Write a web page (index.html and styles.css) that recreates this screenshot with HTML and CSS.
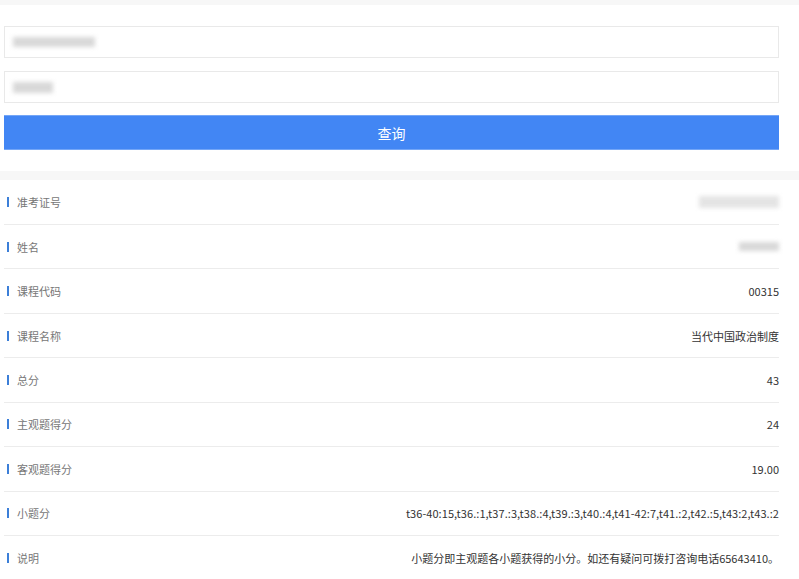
FILE: index.html
```html
<!DOCTYPE html>
<html lang="zh-CN">
<head>
    <meta charset="UTF-8">
    <meta name="viewport" content="width=device-width, initial-scale=1.0">
    <title>成绩查询</title>
    <link rel="stylesheet" href="styles.css">
</head>
<body>
    <div class="band top-band"></div>

    <div class="query-form">
        <div class="field"><span class="blur blur-id"></span></div>
        <div class="field"><span class="blur blur-code"></span></div>
        <div class="btn-query">查询</div>
    </div>

    <div class="band mid-band"></div>

    <ul class="result-list">
        <li class="row"><span class="label">准考证号</span><span class="value"><span class="blur blur-val-long"></span></span></li>
        <li class="row"><span class="label">姓名</span><span class="value"><span class="blur blur-val-short"></span></span></li>
        <li class="row"><span class="label">课程代码</span><span class="value">00315</span></li>
        <li class="row"><span class="label">课程名称</span><span class="value">当代中国政治制度</span></li>
        <li class="row"><span class="label">总分</span><span class="value">43</span></li>
        <li class="row"><span class="label">主观题得分</span><span class="value">24</span></li>
        <li class="row"><span class="label">客观题得分</span><span class="value">19.00</span></li>
        <li class="row"><span class="label">小题分</span><span class="value score-detail">t36-40:15,t36.:1,t37.:3,t38.:4,t39.:3,t40.:4,t41-42:7,t41.:2,t42.:5,t43:2,t43.:2</span></li>
        <li class="row"><span class="label">说明</span><span class="value">小题分即主观题各小题获得的小分。如还有疑问可拨打咨询电话65643410。</span></li>
    </ul>
</body>
</html>
```

FILE: styles.css
```css
* {
    box-sizing: border-box;
    margin: 0;
    padding: 0;
}
body {
    background-color: #fff;
    font-family: "Noto Sans CJK SC", "Noto Sans", sans-serif;
    font-size: 11px;
    color: #333;
    overflow: hidden;
}
.band {
    background-color: #f7f7f7;
}
.top-band {
    height: 5px;
}
.mid-band {
    height: 9px;
}
.query-form {
    display: flex;
    flex-direction: column;
    gap: 13px;
    padding: 21px 20px 21px 4px;
}
.field {
    display: flex;
    align-items: center;
    height: 32px;
    border: 1px solid #e9e9e9;
    padding-left: 8px;
}
.blur {
    display: inline-block;
    background-color: #cfcfcf;
    filter: blur(2px);
    opacity: 0.8;
}
.blur-id {
    width: 82px;
    height: 10px;
}
.blur-code {
    width: 40px;
    height: 11px;
}
.blur-val-long {
    width: 80px;
    height: 12px;
    opacity: 0.55;
}
.blur-val-short {
    width: 40px;
    height: 9px;
}
.btn-query {
    display: flex;
    align-items: center;
    justify-content: center;
    height: 35px;
    margin-top: -1px;
    background-color: #4286f4;
    border-top: 1px solid #74a6f7;
    border-bottom: 1px solid #74a6f7;
    color: #fff;
    font-size: 14px;
}
.result-list {
    list-style: none;
    padding: 0 20px 0 4px;
}
.row {
    display: flex;
    align-items: center;
    justify-content: space-between;
    height: 44.45px;
    border-bottom: 1px solid #ececec;
}
.row:first-child {
    height: 45px;
}
.label {
    display: flex;
    align-items: center;
    gap: 8px;
    padding-left: 3px;
    color: #777;
}
.label::before {
    content: "";
    width: 2px;
    height: 10px;
    background-color: #3c7fd8;
}
.value {
    display: flex;
    align-items: center;
    color: #333;
}
.score-detail {
    letter-spacing: 0.06px;
}
```
